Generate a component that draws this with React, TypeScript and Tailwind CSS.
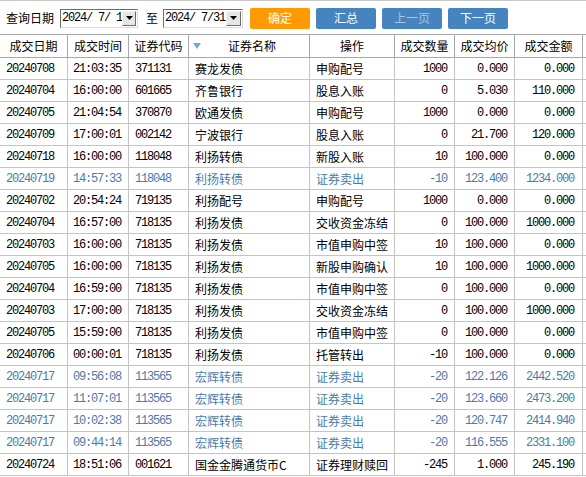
import React from "react";

type Row = {
  d: string; t: string; c: string; n: string; op: string; q: string; p: string; a: string; blue?: boolean;
};

const rows: Row[] = [
  { d: "20240708", t: "21:03:35", c: "371131", n: "赛龙发债", op: "申购配号", q: "1000", p: "0.000", a: "0.000" },
  { d: "20240704", t: "16:00:00", c: "601665", n: "齐鲁银行", op: "股息入账", q: "0", p: "5.030", a: "110.000" },
  { d: "20240705", t: "21:04:54", c: "370870", n: "欧通发债", op: "申购配号", q: "1000", p: "0.000", a: "0.000" },
  { d: "20240709", t: "17:00:01", c: "002142", n: "宁波银行", op: "股息入账", q: "0", p: "21.700", a: "120.000" },
  { d: "20240718", t: "16:00:00", c: "118048", n: "利扬转债", op: "新股入账", q: "10", p: "100.000", a: "0.000" },
  { d: "20240719", t: "14:57:33", c: "118048", n: "利扬转债", op: "证券卖出", q: "-10", p: "123.400", a: "1234.000", blue: true },
  { d: "20240702", t: "20:54:24", c: "719135", n: "利扬配号", op: "申购配号", q: "1000", p: "0.000", a: "0.000" },
  { d: "20240704", t: "16:57:00", c: "718135", n: "利扬发债", op: "交收资金冻结", q: "0", p: "100.000", a: "1000.000" },
  { d: "20240703", t: "16:00:00", c: "718135", n: "利扬发债", op: "市值申购中签", q: "10", p: "100.000", a: "0.000" },
  { d: "20240705", t: "16:00:00", c: "718135", n: "利扬发债", op: "新股申购确认", q: "10", p: "100.000", a: "1000.000" },
  { d: "20240704", t: "16:59:00", c: "718135", n: "利扬发债", op: "市值申购中签", q: "0", p: "100.000", a: "0.000" },
  { d: "20240703", t: "17:00:00", c: "718135", n: "利扬发债", op: "交收资金冻结", q: "0", p: "100.000", a: "1000.000" },
  { d: "20240705", t: "15:59:00", c: "718135", n: "利扬发债", op: "市值申购中签", q: "0", p: "100.000", a: "0.000" },
  { d: "20240706", t: "00:00:01", c: "718135", n: "利扬发债", op: "托管转出", q: "-10", p: "100.000", a: "0.000" },
  { d: "20240717", t: "09:56:08", c: "113565", n: "宏辉转债", op: "证券卖出", q: "-20", p: "122.126", a: "2442.520", blue: true },
  { d: "20240717", t: "11:07:01", c: "113565", n: "宏辉转债", op: "证券卖出", q: "-20", p: "123.660", a: "2473.200", blue: true },
  { d: "20240717", t: "10:02:38", c: "113565", n: "宏辉转债", op: "证券卖出", q: "-20", p: "120.747", a: "2414.940", blue: true },
  { d: "20240717", t: "09:44:14", c: "113565", n: "宏辉转债", op: "证券卖出", q: "-20", p: "116.555", a: "2331.100", blue: true },
  { d: "20240724", t: "18:51:06", c: "001621", n: "国金金腾通货币C", op: "证券理财赎回", q: "-245", p: "1.000", a: "245.190" },
];

const grid = "grid grid-cols-[68px_61px_60px_121px_85px_60px_60px_68px_1fr]";
const mono = "font-['Liberation_Mono',monospace] text-[12px] tracking-[-1.2px]";
const cjk = "font-['Noto_Sans_CJK_SC','Noto_Sans',sans-serif] text-[12px]";

function DateBox({ value, w }: { value: string; w: string }) {
  return (
    <div className={`flex h-[19px] ${w} items-center border border-t-[#6d6d6d] border-l-[#6d6d6d] border-r-[#dcdcdc] border-b-[#dcdcdc] bg-white`}>
      <div className={`flex-1 pl-[1px] ${mono} whitespace-pre leading-none text-black`}>{value}</div>
      <div className="mr-[1px] flex h-[15px] w-[15px] items-center justify-center border border-t-[#f4f4f4] border-l-[#f4f4f4] border-r-[#6d6d6d] border-b-[#6d6d6d] bg-[#e6e6e6]">
        <svg width="7" height="4" viewBox="0 0 7 4">
          <polygon points="0,0 7,0 3.5,4" fill="#000" />
        </svg>
      </div>
    </div>
  );
}

export default function App() {
  return (
    <div className="h-[477px] w-[586px] overflow-hidden bg-white">
      <div className="flex h-[34px] items-center border-t border-[#c8c8c8] pl-[6px] pt-[1px]">
        <span className={`${cjk} text-black`}>查询日期</span>
        <div className="ml-[6px]">
          <DateBox value="2024/ 7/ 1" w="w-[78px]" />
        </div>
        <span className={`${cjk} ml-[8px] text-black`}>至</span>
        <div className="ml-[5px]">
          <DateBox value="2024/ 7/31" w="w-[80px]" />
        </div>
        <button className={`${cjk} ml-[7px] h-[21px] w-[60px] rounded-[2px] bg-[#ff9a05] text-white`}>确定</button>
        <button className={`${cjk} ml-[6px] h-[21px] w-[60px] rounded-[2px] bg-[#4584bf] text-white`}>汇总</button>
        <button className={`${cjk} ml-[6px] h-[21px] w-[60px] rounded-[2px] bg-[#4584bf] text-[#a9c5e0]`}>上一页</button>
        <button className={`${cjk} ml-[6px] h-[21px] w-[60px] rounded-[2px] bg-[#4584bf] text-white`}>下一页</button>
      </div>

      <div className={`${grid} h-[24px] border-t border-b border-[#a8a8a8] bg-white ${cjk} text-black`}>
        <div className="flex items-center justify-center border-r border-[#a8a8a8]">成交日期</div>
        <div className="flex items-center justify-center border-r border-[#a8a8a8]">成交时间</div>
        <div className="flex items-center justify-center border-r border-[#a8a8a8]">证券代码</div>
        <div className="relative flex items-center justify-center border-r border-[#a8a8a8] pl-[6px]">
          <svg className="absolute left-[4px] top-[8px]" width="8" height="6" viewBox="0 0 8 6">
            <polygon points="0,0 8,0 4,6" fill="#6aa9e2" />
          </svg>
          证券名称
        </div>
        <div className="flex items-center justify-center border-r border-[#a8a8a8]">操作</div>
        <div className="flex items-center justify-center border-r border-[#a8a8a8]">成交数量</div>
        <div className="flex items-center justify-center border-r border-[#a8a8a8]">成交均价</div>
        <div className="flex items-center justify-center border-r border-[#a8a8a8]">成交金额</div>
        <div />
      </div>

      {rows.map((r, i) => {
        const color = r.blue ? "text-[#4a7ba8]" : "text-black";
        return (
          <div key={i} className={`${grid} h-[22px] border-b border-[#c4c4c4] ${color}`}>
            <div className={`flex items-center border-r border-[#c4c4c4] pl-[6px] ${mono}`}>{r.d}</div>
            <div className={`flex items-center border-r border-[#c4c4c4] pl-[5px] ${mono}`}>{r.t}</div>
            <div className={`flex items-center border-r border-[#c4c4c4] pl-[6px] ${mono}`}>{r.c}</div>
            <div className={`flex items-center border-r border-[#c4c4c4] pl-[6px] ${cjk} whitespace-nowrap`}>{r.n}</div>
            <div className={`flex items-center border-r border-[#c4c4c4] pl-[6px] ${cjk} whitespace-nowrap`}>{r.op}</div>
            <div className={`flex items-center justify-end border-r border-[#c4c4c4] pr-[7px] ${mono}`}>{r.q}</div>
            <div className={`flex items-center justify-end border-r border-[#c4c4c4] pr-[7px] ${mono}`}>{r.p}</div>
            <div className={`flex items-center justify-end border-r border-[#c4c4c4] pr-[8px] ${mono}`}>{r.a}</div>
            <div />
          </div>
        );
      })}
    </div>
  );
}
